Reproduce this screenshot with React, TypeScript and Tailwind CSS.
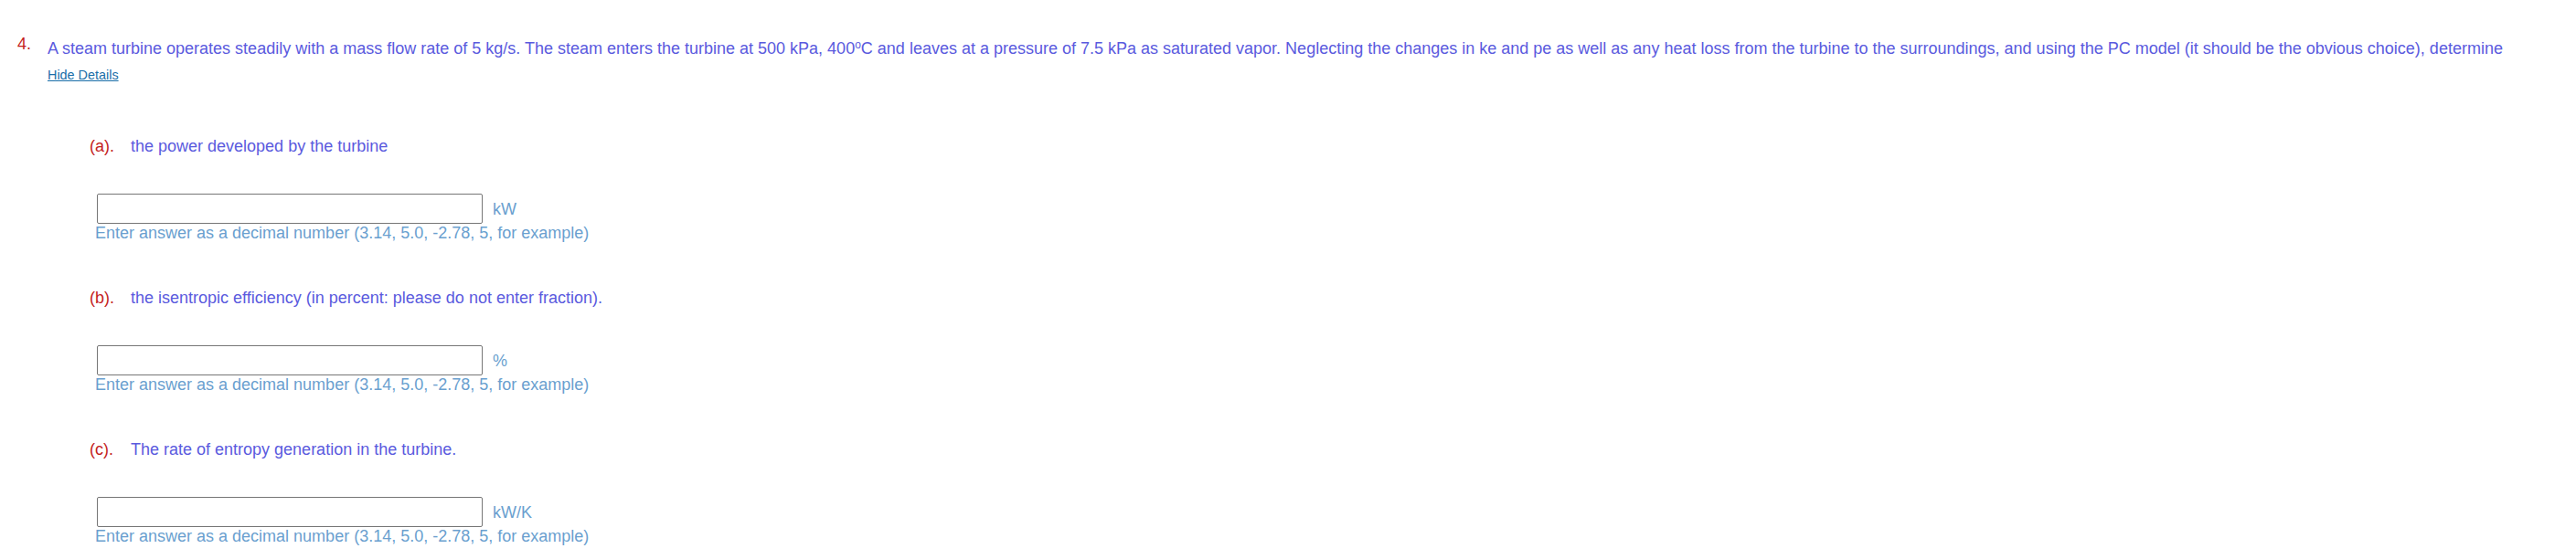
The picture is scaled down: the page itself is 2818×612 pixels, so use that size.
import { useState } from 'react'

const parts = [
  { key: 'a', label: '(a).', text: 'the power developed by the turbine', unit: 'kW' },
  { key: 'b', label: '(b).', text: 'the isentropic efficiency (in percent: please do not enter fraction).', unit: '%' },
  { key: 'c', label: '(c).', text: 'The rate of entropy generation in the turbine.', unit: 'kW/K' },
]

export default function App() {
  const [values, setValues] = useState<Record<string, string>>({})

  return (
    <div className="min-h-[612px] bg-white font-['Liberation_Sans',Arial,sans-serif] text-[18px]">
      {/* Question stem */}
      <div className="flex items-start pt-[43px] pl-[19px]">
        <span className="-mt-[5px] w-[33px] shrink-0 leading-[20px] text-[#c41e1e]">4.</span>
        <div>
          <p className="whitespace-nowrap leading-[20px] text-[#5a5ade]">
            A steam turbine operates steadily with a mass flow rate of 5 kg/s. The steam enters the turbine at 500 kPa, 400<sup className="text-[12px]">o</sup>C and leaves at a pressure of 7.5 kPa as saturated vapor. Neglecting the changes in ke and pe as well as any heat loss from the turbine to the surroundings, and using the PC model (it should be the obvious choice), determine
          </p>
          <a href="#" className="mt-[11px] block w-fit text-[14.4px] leading-[17px] text-[#1a6ea8] underline">
            Hide Details
          </a>
        </div>
      </div>

      {/* Parts */}
      <div className="flex flex-col gap-[51px] pt-[59px] pl-[98px]">
        {parts.map(p => (
          <div key={p.key}>
            <div className="flex leading-[20px]">
              <span className="w-[45px] shrink-0 text-[#c41e1e]">{p.label}</span>
              <span className="text-[#5a5ade]">{p.text}</span>
            </div>
            <div className="mt-[42px] ml-[8px] flex items-center">
              <input
                type="text"
                value={values[p.key] ?? ''}
                onChange={e => setValues({ ...values, [p.key]: e.target.value })}
                className="h-[33px] w-[422px] rounded-[2px] border border-[#767676] bg-white px-1 outline-none"
              />
              <span className="ml-[11px] leading-[20px] text-[#6a9fcf]">{p.unit}</span>
            </div>
            <p className="ml-[6px] leading-[20px] text-[#6a9fcf]">
              Enter answer as a decimal number (3.14, 5.0, -2.78, 5, for example)
            </p>
          </div>
        ))}
      </div>
    </div>
  )
}
